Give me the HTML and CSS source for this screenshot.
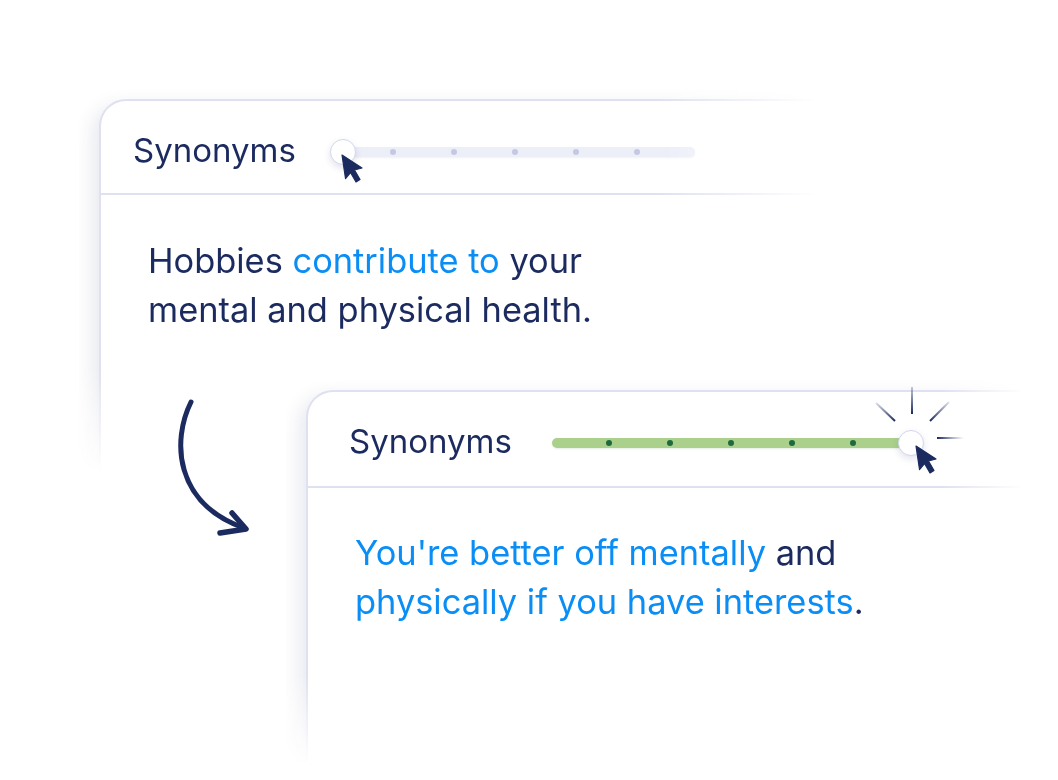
FILE: index.html
```html
<!DOCTYPE html>
<html>
<head>
<meta charset="utf-8">
<link rel="stylesheet" href="styles.css">
</head>
<body>
<div class="stage">
  <div class="fade fade-one">
    <div class="card card-one">
      <div class="head head-one">
        <span class="label">Synonyms</span>
        <div class="slider slider-one">
          <span class="knob knob-one">
            <svg class="cursor cursor-one" width="22" height="29" viewBox="0 0 22 29"><path d="M1 1 L21 14 L13.5 16 L19 25.5 L15 28 L9.5 18.5 L4.5 24.5 Z" fill="#1c2b5f" stroke="#1c2b5f" stroke-width="1.2" stroke-linejoin="round"/></svg>
          </span>
          <div class="track track-grey">
            <i class="dot"></i><i class="dot"></i><i class="dot"></i><i class="dot"></i><i class="dot"></i>
          </div>
        </div>
      </div>
      <p class="text text-one">Hobbies <span class="hl">contribute to</span> your<br>mental and physical health.</p>
    </div>
  </div>

  <div class="row-two">
    <svg class="arrow" width="90" height="150" viewBox="0 0 90 150">
      <path d="M21 7 C2 45 4 108 74 133" fill="none" stroke="#1c2b5f" stroke-width="5" stroke-linecap="round"/>
      <path d="M62 118 L76 134 L50 138" fill="none" stroke="#1c2b5f" stroke-width="5.5" stroke-linecap="round" stroke-linejoin="round"/>
    </svg>
    <div class="fade fade-two">
      <div class="card card-two">
        <div class="head head-two">
          <span class="label">Synonyms</span>
          <div class="slider slider-two">
            <div class="track track-green">
              <i class="dot"></i><i class="dot"></i><i class="dot"></i><i class="dot"></i><i class="dot"></i>
            </div>
            <span class="knob knob-two">
              <svg class="sparkle" width="92" height="56" viewBox="873 384 92 56">
                <defs>
                  <linearGradient id="gv" gradientUnits="userSpaceOnUse" x1="911" y1="386" x2="911" y2="413"><stop offset="0" stop-color="#1c2b5f" stop-opacity="0.25"/><stop offset="1" stop-color="#1c2b5f"/></linearGradient>
                  <linearGradient id="gl" gradientUnits="userSpaceOnUse" x1="875" y1="402" x2="894" y2="420"><stop offset="0" stop-color="#1c2b5f" stop-opacity="0.15"/><stop offset="1" stop-color="#1c2b5f"/></linearGradient>
                  <linearGradient id="gr" gradientUnits="userSpaceOnUse" x1="948" y1="401" x2="929" y2="420"><stop offset="0" stop-color="#1c2b5f" stop-opacity="0.15"/><stop offset="1" stop-color="#1c2b5f"/></linearGradient>
                  <linearGradient id="gh" gradientUnits="userSpaceOnUse" x1="936" y1="437" x2="963" y2="437"><stop offset="0" stop-color="#1c2b5f"/><stop offset="1" stop-color="#1c2b5f" stop-opacity="0"/></linearGradient>
                </defs>
                <line x1="911" y1="386" x2="911" y2="413" stroke="url(#gv)" stroke-width="2"/>
                <line x1="875" y1="402" x2="894" y2="420" stroke="url(#gl)" stroke-width="2"/>
                <line x1="948" y1="401" x2="929" y2="420" stroke="url(#gr)" stroke-width="2"/>
                <line x1="936" y1="437" x2="963" y2="437" stroke="url(#gh)" stroke-width="2"/>
              </svg>
              <svg class="cursor cursor-two" width="22" height="29" viewBox="0 0 22 29"><path d="M1 1 L21 14 L13.5 16 L19 25.5 L15 28 L9.5 18.5 L4.5 24.5 Z" fill="#1c2b5f" stroke="#1c2b5f" stroke-width="1.2" stroke-linejoin="round"/></svg>
            </span>
          </div>
        </div>
        <p class="text text-two"><span class="hl">You're better off mentally</span> and<br><span class="hl">physically if you have interests</span>.</p>
      </div>
    </div>
  </div>
</div>
</body>
</html>
```

FILE: styles.css
```css
html, body {
  margin: 0;
  padding: 0;
  background: #ffffff;
  overflow: hidden;
}

body {
  width: 1058px;
  height: 780px;
  font-family: "Inter", "Noto Sans", sans-serif;
  color: #1c2b5f;
}

.stage {
  display: grid;
  grid-template-columns: 1fr;
  grid-template-rows: 1fr;
  width: 1058px;
  height: 780px;
}

.fade-one,
.row-two {
  grid-area: 1 / 1;
  align-self: start;
  justify-self: start;
}

.fade {
  padding: 20px;
}

.fade-one {
  margin: 79px 0 0 79px;
  -webkit-mask-image: linear-gradient(to right, #000 76%, transparent 97%), linear-gradient(to bottom, #000 70%, transparent 95%);
  -webkit-mask-composite: source-in;
  mask-image: linear-gradient(to right, #000 76%, transparent 97%), linear-gradient(to bottom, #000 70%, transparent 95%);
  mask-composite: intersect;
}

.fade-two {
  -webkit-mask-image: linear-gradient(to right, #000 87%, transparent 98%), linear-gradient(to bottom, #000 74%, transparent 96%);
  -webkit-mask-composite: source-in;
  mask-image: linear-gradient(to right, #000 87%, transparent 98%), linear-gradient(to bottom, #000 74%, transparent 96%);
  mask-composite: intersect;
}

.card {
  background: #ffffff;
  border: 2px solid #dfe1f1;
  border-right: none;
  border-bottom: none;
  border-top-left-radius: 27px;
  box-shadow: -7px 6px 18px rgba(40, 50, 110, 0.10);
}

.card-one {
  width: 720px;
  height: 372px;
}

.row-two {
  position: relative;
  z-index: 1;
  display: flex;
  align-items: flex-start;
  margin: 370px 0 0 170px;
}

.arrow {
  display: block;
  margin-top: 25px;
  flex: none;
}

.fade-two {
  margin-left: 26px;
}

.card-two {
  width: 712px;
  height: 370px;
}

.head {
  display: flex;
  align-items: center;
  border-bottom: 2px solid #dfe1f1;
  box-sizing: border-box;
}

.head-one {
  height: 94px;
  padding: 6px 0 0 32px;
}

.head-two {
  height: 96px;
  padding: 4px 0 0 41px;
}

.label {
  font-size: 33px;
  font-weight: 400;
  line-height: 1;
}

.slider {
  display: flex;
  align-items: center;
}

.slider-one {
  margin-left: 34px;
  margin-top: 4px;
}

.slider-two {
  margin-left: 40px;
  margin-top: 4px;
}

.track {
  height: 10px;
  border-radius: 5px;
  display: flex;
  align-items: center;
  gap: 55px;
  box-sizing: border-box;
}

.track-grey {
  width: 350px;
  margin-left: -11px;
  padding-left: 45px;
  background: #eceef8;
  box-shadow: 0 1px 2px rgba(60, 70, 140, 0.08);
}

.track-grey .dot {
  background: #c4c8e2;
}

.track-green {
  width: 364px;
  padding-left: 54px;
  background: #abd08b;
  box-shadow: 0 1px 2px rgba(60, 110, 40, 0.12);
}

.track-green .dot {
  background: #1d6a40;
}

.dot {
  display: block;
  width: 6px;
  height: 6px;
  border-radius: 50%;
  flex: none;
}

.knob {
  position: relative;
  z-index: 1;
  flex: none;
  display: block;
  width: 26px;
  height: 26px;
  box-sizing: border-box;
  border-radius: 50%;
  background: #ffffff;
  border: 1.5px solid #d3d7ee;
  box-shadow: 0 3px 7px rgba(30, 40, 100, 0.13);
}

.knob-two {
  margin-left: -18px;
}

.cursor {
  position: absolute;
  display: block;
}

.cursor-one {
  left: 10px;
  top: 14px;
}

.cursor-two {
  left: 16px;
  top: 14px;
}

.sparkle {
  position: absolute;
  left: -25px;
  top: -46px;
  display: block;
}

.text {
  margin: 0;
  font-size: 34.4px;
  line-height: 49px;
  font-weight: 400;
  color: #1c2b5f;
}

.text-one {
  padding: 41px 0 0 47px;
}

.text-two {
  padding: 40px 0 0 47px;
}

.hl {
  color: #0a8ef5;
}
```
